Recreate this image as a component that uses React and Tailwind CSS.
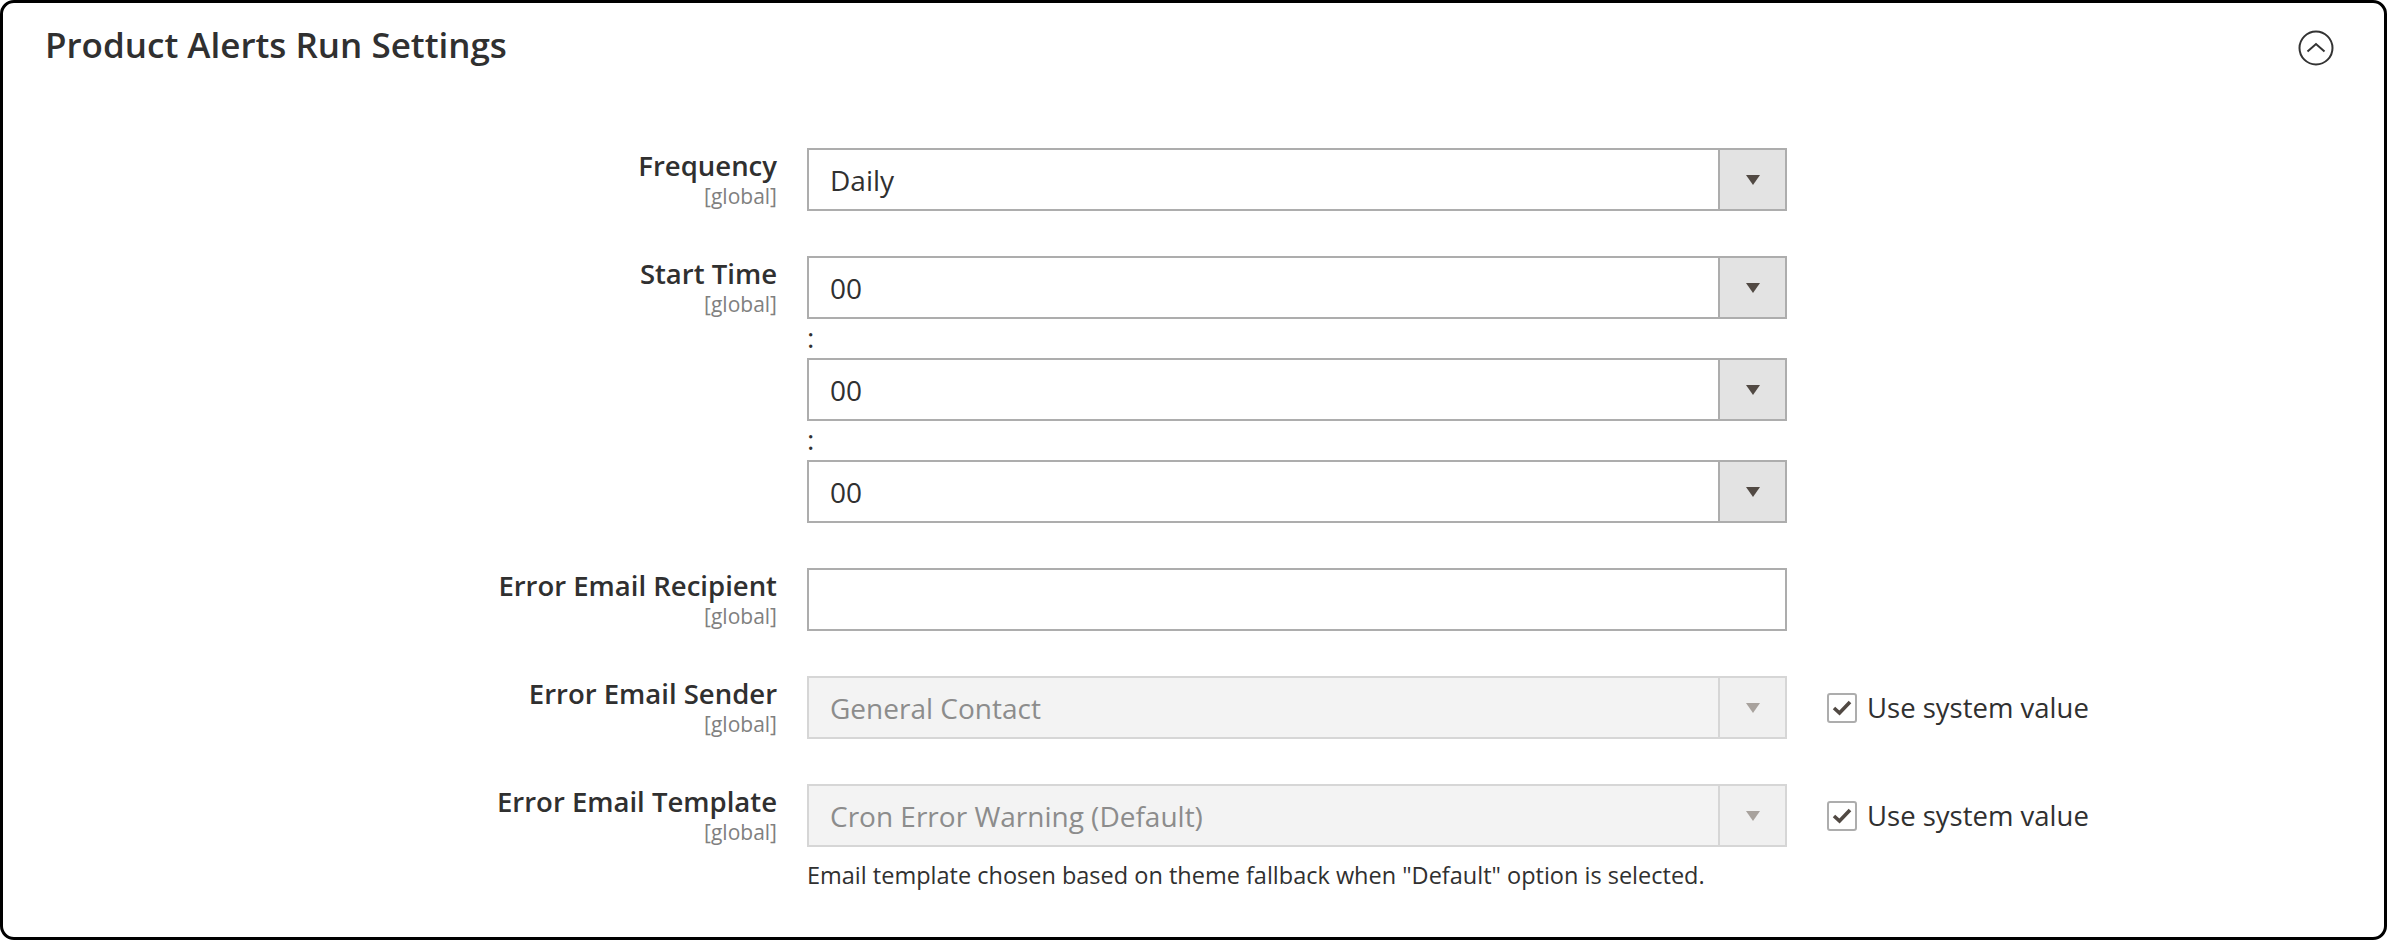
import React from 'react';

const font = "font-['Open_Sans',sans-serif]";

const Arrow = ({ disabled }) => (
  <svg width="16" height="10" viewBox="0 0 16 10">
    <path d="M1 0 H15 L8 10 Z" fill={disabled ? '#a8a29d' : '#514943'} />
  </svg>
);

const Select = ({ value, disabled }) => (
  <div
    className={`flex h-[63px] w-[980px] border-2 ${disabled ? 'border-[#d6d6d6] bg-[#f3f3f3]' : 'border-[#adadad] bg-white'}`}
  >
    <div className={`flex flex-1 items-center pl-[21px] text-[28px] ${disabled ? 'text-[#8c8c8c]' : 'text-[#303030]'}`}>
      {value}
    </div>
    <div
      className={`flex w-[67px] items-center justify-center border-l-2 ${disabled ? 'border-[#d6d6d6] bg-[#f0f0f0]' : 'border-[#adadad] bg-[#e3e3e3]'}`}
    >
      <Arrow disabled={disabled} />
    </div>
  </div>
);

const SystemValue = () => (
  <div className="ml-[10px] flex h-[63px] items-center gap-[10px]">
    <div className="flex h-[30px] w-[30px] items-center justify-center rounded-[3px] border-2 border-[#adadad] bg-white">
      <svg width="22" height="18" viewBox="0 0 22 18">
        <path d="M3 9 L8.5 14 L19 3" fill="none" stroke="#514943" strokeWidth="3.6" />
      </svg>
    </div>
    <span className="text-[27.5px] text-[#303030]">Use system value</span>
  </div>
);

const Label = ({ text }) => (
  <div className="w-[774px] shrink-0 text-right">
    <div className="text-[27.5px] font-semibold leading-[36px] text-[#303030]">{text}</div>
    <div className="text-[21px] leading-[24px] text-[#808080]">[global]</div>
  </div>
);

const Colon = () => (
  <div className="h-[39px] text-[28px] leading-[37px] text-[#303030]">:</div>
);

export default function App() {
  return (
    <div className={`h-[941px] w-[2389px] bg-white ${font}`}>
      <div className="h-[940px] w-[2387px] rounded-[14px] border-[3px] border-black bg-white">
        <div className="flex items-start justify-between pl-[42px] pr-[50px] pt-[18px]">
          <h1 className="text-[35px] font-semibold leading-[48px] text-[#303030]">
            Product Alerts Run Settings
          </h1>
          <svg className="mt-[9px]" width="36" height="36" viewBox="0 0 36 36">
            <circle cx="18" cy="18" r="16.5" fill="none" stroke="#333" strokeWidth="2" />
            <path d="M9.5 21.5 L18 14 L26.5 21.5" fill="none" stroke="#333" strokeWidth="2" />
          </svg>
        </div>

        <div className="mt-[79px] flex flex-col gap-[45px]">
          <div className="flex gap-[30px]">
            <Label text="Frequency" />
            <Select value="Daily" />
          </div>

          <div className="flex gap-[30px]">
            <Label text="Start Time" />
            <div className="flex flex-col">
              <Select value="00" />
              <Colon />
              <Select value="00" />
              <Colon />
              <Select value="00" />
            </div>
          </div>

          <div className="flex gap-[30px]">
            <Label text="Error Email Recipient" />
            <div className="h-[63px] w-[980px] border-2 border-[#adadad] bg-white" />
          </div>

          <div className="flex gap-[30px]">
            <Label text="Error Email Sender" />
            <Select value="General Contact" disabled />
            <SystemValue />
          </div>

          <div className="flex gap-[30px]">
            <Label text="Error Email Template" />
            <div className="flex flex-col">
              <Select value="Cron Error Warning (Default)" disabled />
              <p className="mt-[12px] text-[23.5px] leading-[33px] text-[#303030]">
                Email template chosen based on theme fallback when "Default" option is selected.
              </p>
            </div>
            <SystemValue />
          </div>
        </div>
      </div>
    </div>
  );
}
